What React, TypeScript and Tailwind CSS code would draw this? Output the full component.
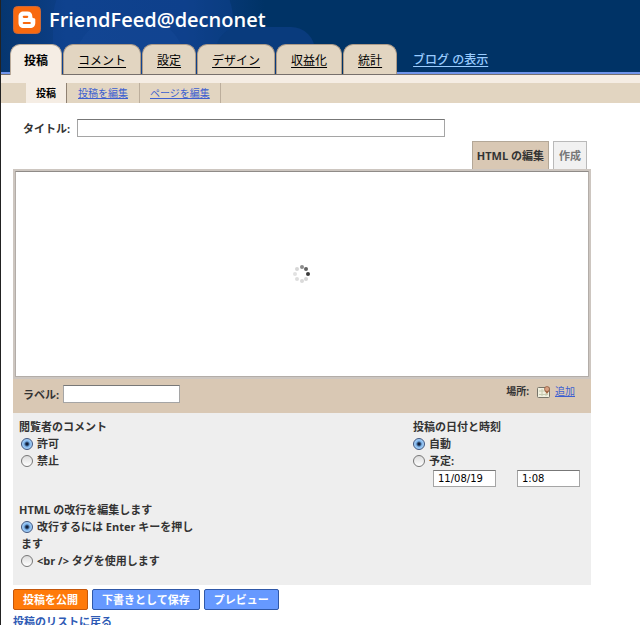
import type { ReactNode } from "react";

const tabs = ["投稿", "コメント", "設定", "デザイン", "収益化", "統計"];

const spinnerDots = [
  { x: 16, y: 10, r: 2, fill: "#3a3a3a" },
  { x: 14, y: 5, r: 2, fill: "#636363" },
  { x: 10, y: 3, r: 2, fill: "#8c8c8c" },
  { x: 5, y: 5, r: 2, fill: "#d6d6d6" },
  { x: 3, y: 10, r: 2, fill: "#e2e2e2" },
  { x: 5, y: 15, r: 2, fill: "#dedede" },
  { x: 10, y: 17, r: 2, fill: "#dadada" },
  { x: 14, y: 15, r: 2, fill: "#d6d6d6" }
];

function BloggerLogo() {
  return (
    <svg className="size-7" viewBox="0 0 28 28" aria-hidden="true">
      <rect x="0.5" y="0.5" width="27" height="27" rx="4" fill="#f8690f" stroke="#c9683a" />
      <path
        d="M10.500 5.500h4c3 0 4.800 1.900 4.800 4.400v.9c0 1 .6 1.400 1.500 1.400 1 0 1.500.5 1.500 1.500v3.200c0 3.100-2.100 5.100-5.100 5.100h-6.600c-3 0-5.100-2-5.100-5.100v-6.300c0-3.100 2-5.100 5-5.100z"
        fill="#fff"
      />
      <path d="M10.800 10.800h3.400M10.800 17h6" stroke="#f8690f" strokeWidth="2.200" strokeLinecap="round" />
    </svg>
  );
}

function Spinner() {
  return (
    <svg className="size-5" viewBox="0 0 20 20" role="img" aria-label="読み込み中">
      {spinnerDots.map((d) => (
        <circle key={`${d.x}-${d.y}`} cx={d.x} cy={d.y} r={d.r} fill={d.fill} />
      ))}
    </svg>
  );
}

function MapIcon() {
  return (
    <svg className="h-3 w-3.5" viewBox="0 0 14 12" aria-hidden="true">
      <rect x="0.5" y="1.500" width="12" height="10" rx="1" fill="#f1f0df" stroke="#77756a" />
      <path d="M2 5h6M2 8.500h9M5 3v7M9 7v3" stroke="#c6cab0" />
      <path d="M10 8L7.500 4.500h5z" fill="#a3623d" />
      <circle cx="10" cy="3" r="2.500" fill="#d9a183" stroke="#8d5536" strokeWidth="0.700" />
    </svg>
  );
}

function Radio({ name, checked, children }: { name: string; checked?: boolean; children: ReactNode }) {
  return (
    <label className="block">
      <input
        type="radio"
        name={name}
        defaultChecked={checked}
        className="mr-1 size-3 appearance-none rounded-full border border-[#777] bg-linear-to-b from-[#dcdcdc] to-white align-[-2px] checked:border-[#3d5580] checked:bg-[radial-gradient(circle,#10203c_0_1px,#7fb6ee_3px,#c4e2fa_6px)]"
      />
      {children}
    </label>
  );
}

function Field({ id, label, value, className }: { id: string; label: string; value?: string; className: string }) {
  return (
    <input
      id={id}
      type="text"
      aria-label={label}
      defaultValue={value}
      className={`border border-[#a5a5a5] border-t-[#777] bg-white px-1 font-['DejaVu_Sans',sans-serif] text-[10px] font-normal text-black ${className}`}
    />
  );
}

export default function App() {
  return (
    <div className="min-h-screen border-l border-[#222] bg-white font-['Open_Sans','Noto_Sans_CJK_JP',sans-serif] text-[11px] leading-[17px] font-bold text-[#333]">
      <header className="relative bg-[#003366]">
        {/* header glow */}
        <svg className="absolute inset-0 h-full w-80" viewBox="0 0 320 75" preserveAspectRatio="xMinYMin slice" aria-hidden="true">
          <defs>
            <linearGradient id="glow" x1="0" x2="1">
              <stop offset="0" stopColor="#06366f" />
              <stop offset="0.250" stopColor="#0d3f88" />
              <stop offset="0.700" stopColor="#0c3d84" />
              <stop offset="1" stopColor="#003366" />
            </linearGradient>
          </defs>
          <rect width="264" height="75" fill="url(#glow)" />
          <rect x="52" y="-40" width="180" height="150" rx="60" fill="#15489a" opacity="0.350" />
          <rect x="74" y="18" width="110" height="90" rx="45" fill="#1a4fa0" opacity="0.250" />
          <rect x="215" y="27" width="99" height="80" rx="24" fill="#093b7d" />
        </svg>
        <div className="relative flex h-11 items-center gap-2 pb-1 pl-3">
          <BloggerLogo />
          <h1 className="text-xl leading-7 font-semibold text-white">FriendFeed@decnonet</h1>
        </div>
        <nav className="relative flex border-b border-[#77706c] text-xs">
          <div className="w-[9px] border-b-2 border-[#6f94ea]" />
          <div className="flex gap-px">
            {tabs.map((tab, i) => (
              <a
                key={tab}
                href="#"
                className={
                  i === 0
                    ? "-mb-px flex h-[31px] items-center rounded-t-[10px] border border-b-0 border-[#b9aa9a] bg-[#f5ede4] px-[13px] pt-0.5 text-black"
                    : "flex h-[30px] items-center rounded-t-[10px] border border-b-0 border-[#ad9b88] bg-[#e2d5c1] px-3.5 pt-0.5 font-normal text-black underline underline-offset-2"
                }
              >
                {tab}
              </a>
            ))}
          </div>
          <div className="flex flex-1 items-center border-b-2 border-[#6f94ea] pt-1 pl-4">
            <a href="#" className="font-medium text-[#99ccff] underline underline-offset-2">
              ブログ の表示
            </a>
          </div>
        </nav>
      </header>

      <nav className="bg-[#f5ede4] pt-2 text-[10px] leading-5">
        <div className="flex bg-[#e2d5c1] pl-[25px]">
          <a href="#" className="border-r border-[#8f8172] bg-[#f5ede4] px-2.5 text-black">
            投稿
          </a>
          <a href="#" className="border-r border-[#bcae9c] px-[11px] font-normal text-[#3d5fd0] underline">
            投稿を編集
          </a>
          <a href="#" className="border-r border-[#bcae9c] px-2.5 font-normal text-[#3d5fd0] underline">
            ページを編集
          </a>
        </div>
      </nav>

      <main className="pl-3">
        <form className="mr-12 max-w-[578px]" onSubmit={(e) => e.preventDefault()}>
          <div className="flex items-center pt-4 pl-2.5">
            <label htmlFor="title" className="w-[54px]">
              タイトル:
            </label>
            <Field id="title" label="タイトル" className="h-[18px] w-[368px]" />
          </div>

          <div className="mt-1 flex justify-end gap-1 pr-1">
            <button type="button" className="h-7 border border-b-0 border-[#b3a797] bg-[#d9c8b4] px-1">
              HTML の編集
            </button>
            <button type="button" className="h-7 border border-b-0 border-[#b9b9b9] bg-[#f1f1f1] px-[5px] text-[#777]">
              作成
            </button>
          </div>

          <div className="bg-[#d9c8b4]">
            <div className="border-2 border-[#cdc6c0]">
              <div className="flex h-[206px] items-center justify-center border border-[#b3ada8] border-t-[#8f8b88] bg-white">
                <Spinner />
              </div>
            </div>
            <div className="flex h-[34px] items-start justify-between pr-4 pl-2.5">
              <div className="flex items-center pt-1.5">
                <label htmlFor="labels" className="w-10">
                  ラベル:
                </label>
                <Field id="labels" label="ラベル" className="h-[18px] w-[117px]" />
              </div>
              <div className="flex items-center gap-1 pt-1 text-[10px]">
                <span className="mr-1">場所:</span>
                <MapIcon />
                <a href="#" className="font-normal text-[#3d5fd0] underline">
                  追加
                </a>
              </div>
            </div>
          </div>

          <div className="bg-[#eeeeee] pt-[5px] pb-4">
            <div className="flex justify-between pr-[11px] pl-1.5">
              <fieldset>
                <legend>閲覧者のコメント</legend>
                <div className="pl-0.5">
                  <Radio name="comments" checked>許可</Radio>
                  <Radio name="comments">禁止</Radio>
                </div>
              </fieldset>
              <fieldset className="w-[167px]">
                <legend>投稿の日付と時刻</legend>
                <Radio name="date" checked>自動</Radio>
                <Radio name="date">予定:</Radio>
                <div className="mt-px flex justify-between pl-5">
                  <Field id="date" label="日付" value="11/08/19" className="h-[17px] w-[63px]" />
                  <Field id="time" label="時刻" value="1:08" className="h-[17px] w-[63px]" />
                </div>
              </fieldset>
            </div>
            <fieldset className="mt-3.5 w-[190px] pl-1.5">
              <legend>HTML の改行を編集します</legend>
              <div className="pl-0.5">
                <Radio name="breaks" checked>改行するには Enter キーを押します</Radio>
                <Radio name="breaks">&lt;br /&gt; タグを使用します</Radio>
              </div>
            </fieldset>
          </div>

          <div className="mt-1 flex gap-1 text-white">
            <button type="submit" className="h-[21px] rounded-xs border border-[#c4570b] bg-[#ff7a0a] px-[9px]">
              投稿を公開
            </button>
            <button type="button" className="h-[21px] rounded-xs border border-[#2f58a8] bg-[#6699ff] px-[9px]">
              下書きとして保存
            </button>
            <button type="button" className="h-[21px] rounded-xs border border-[#2f58a8] bg-[#6699ff] px-[9px]">
              プレビュー
            </button>
          </div>
          <a href="#" className="mt-1 block leading-4 whitespace-nowrap text-[#2f5bb5]">
            投稿のリストに戻る
          </a>
        </form>
      </main>
    </div>
  );
}
